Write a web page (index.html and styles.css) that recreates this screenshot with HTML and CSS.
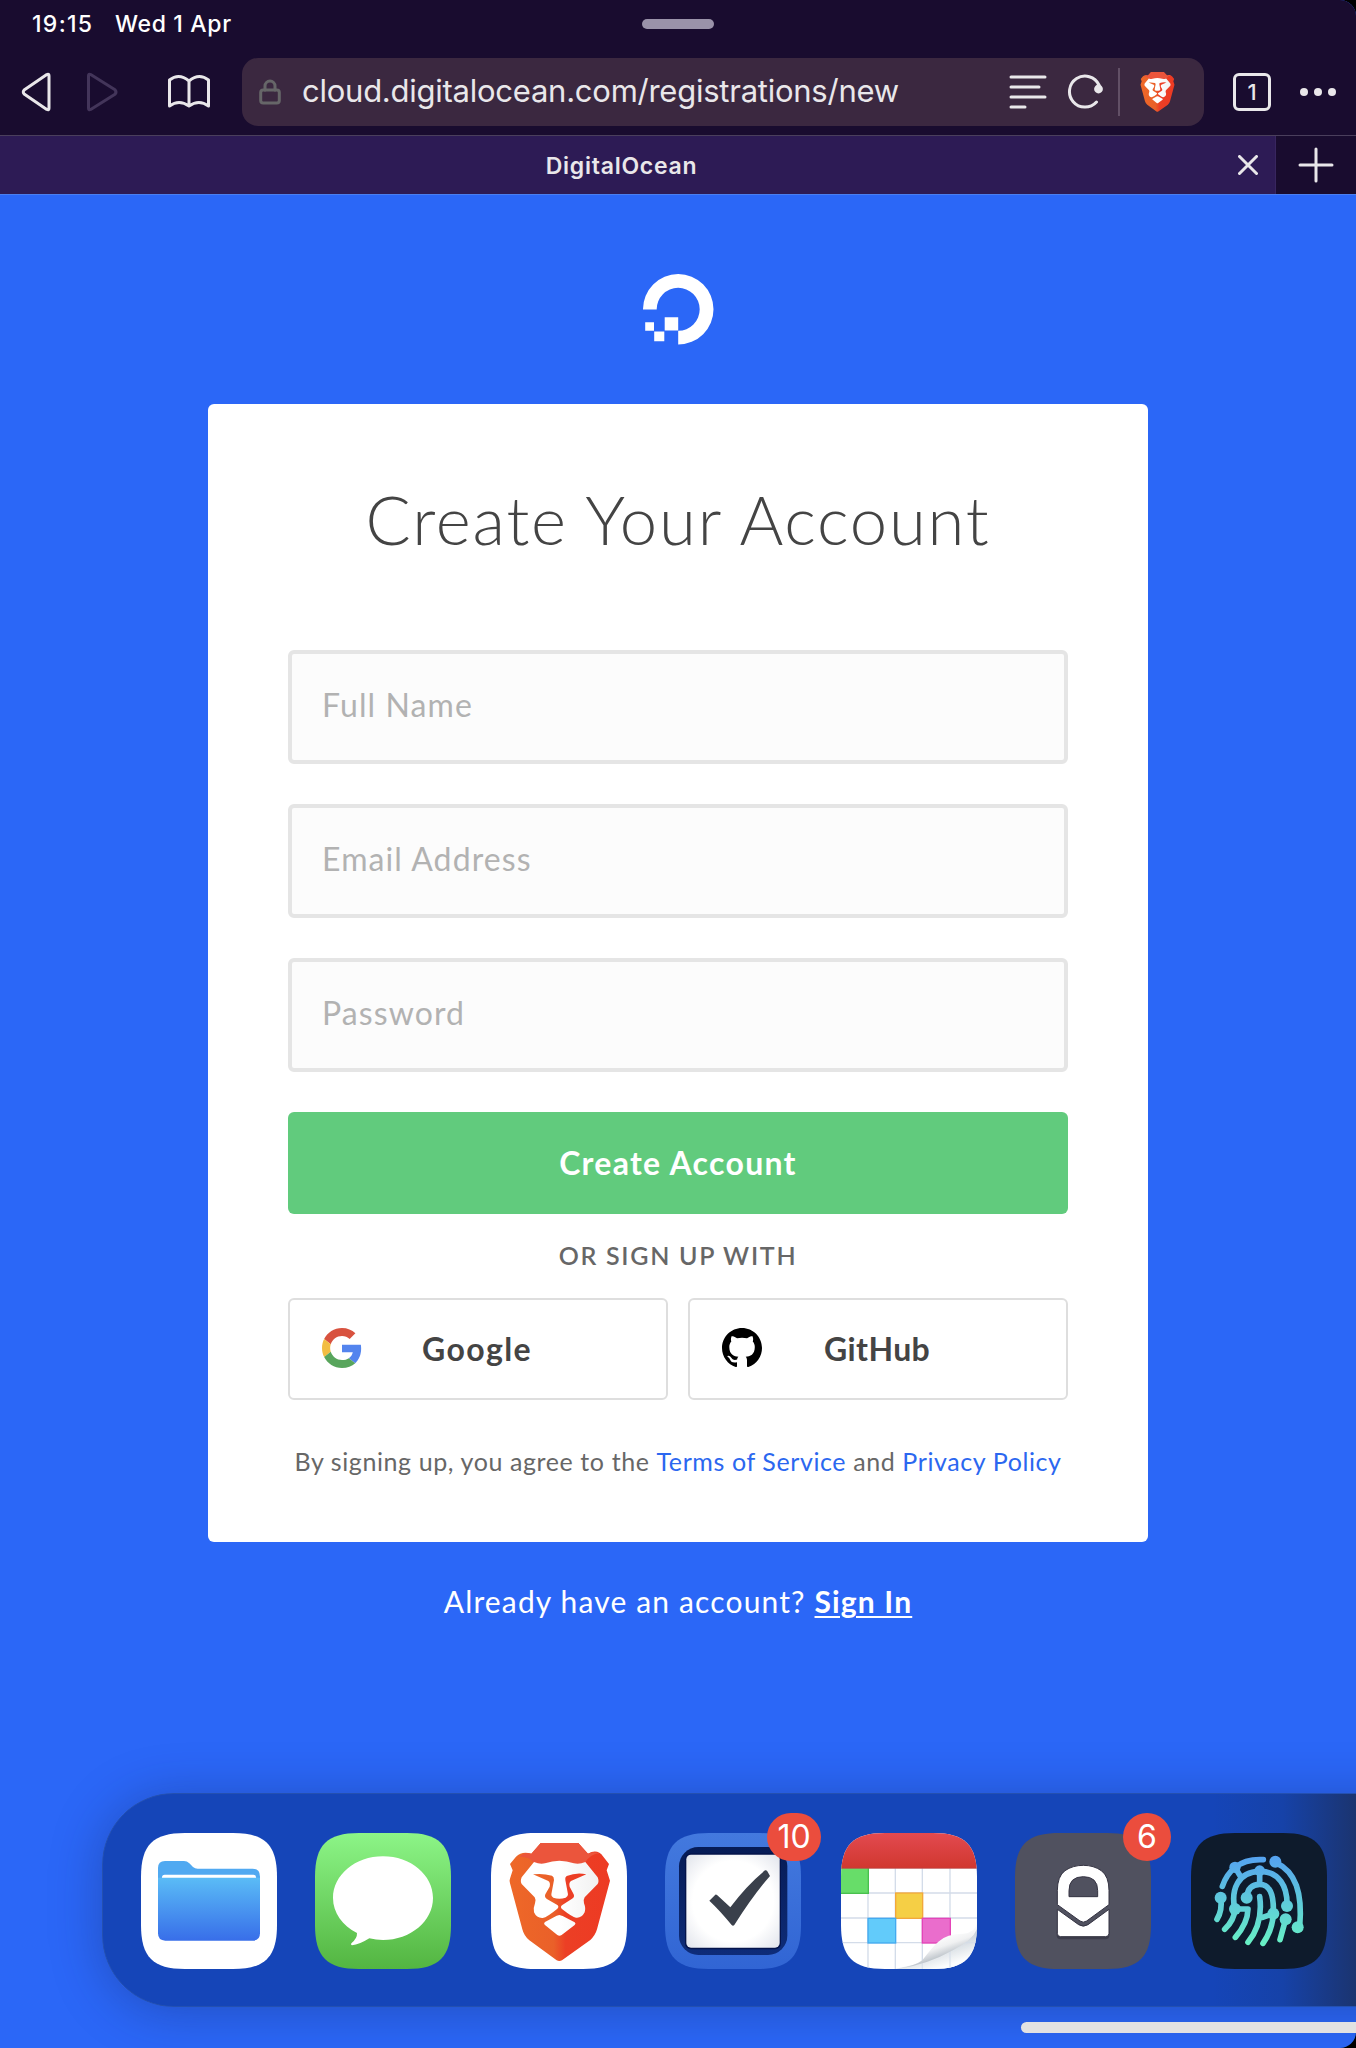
FILE: index.html
```html
<!DOCTYPE html>
<html lang="en">
<head>
<meta charset="utf-8">
<title>DigitalOcean</title>
<link rel="stylesheet" href="styles.css">
</head>
<body>
<svg class="defs" width="0" height="0" aria-hidden="true">
  <defs>
    <linearGradient id="lion-fill" gradientUnits="userSpaceOnUse" x1="118" y1="0" x2="420" y2="0">
      <stop offset="0" stop-color="#ee6828"/><stop offset=".44" stop-color="#ea6029"/><stop offset=".56" stop-color="#ec3f25"/><stop offset="1" stop-color="#ed3a23"/>
    </linearGradient>
    <linearGradient id="lion-face" gradientUnits="userSpaceOnUse" x1="150" y1="0" x2="386" y2="0">
      <stop offset=".5" stop-color="#fff"/><stop offset="1" stop-color="#f1f1f1"/>
    </linearGradient>
  </defs>
  <symbol id="lion" viewBox="118 189 302 356">
    <path fill="url(#lion-fill)" d="M212 189H325L354 221Q382 205 400 230L417 252L410 271L420 302L381 448Q376 466 361 480L276 541Q268 545 260 541L178 481Q162 468 157 448L118 302L128 271L120 252L138 230Q156 212 184 221Z"/>
    <path fill="#eb553c" d="M212 189H325L354 221Q372 213 388 220Q362 222 346 247Q328 256 312 250Q290 242 268 242Q247 242 225 251Q210 256 192 249Q180 230 150 230Q162 214 184 221Z"/>
    <path fill="url(#lion-face)" d="M192 246Q210 254 225 250Q247 242 268 242Q290 242 312 250Q328 254 346 246L383 292Q388 304 383 312L344 352Q339 360 342 370Q348 385 344 397Q335 415 318 413Q308 412 275 386Q270 380 277 375L305 357Q315 352 311 343L299 320Q296 308 303 303L349 283Q320 276 290 288Q284 292 286 300L294 343Q294 351 287 353Q268 359 250 353Q243 351 244 343L252 300Q252 290 246 287Q218 279 189 283L235 303Q242 308 239 320L226 343Q222 352 232 358L262 375Q268 380 262 386Q232 411 218 414Q200 415 192 397Q189 385 195 370Q199 360 194 352L155 312Q150 304 155 292Z"/>
    <path fill="url(#lion-face)" d="M268 405L278 408L314 427Q319 431 314 435L275 465Q268 470 262 465L224 434Q220 430 225 426L260 407Z"/>
  </symbol>
</svg>

<div class="screen">
  <header class="chrome">
    <div class="status">
      <span class="status-time">19:15</span>
      <span class="status-date">Wed 1 Apr</span>
      <span class="grabber"></span>
    </div>
    <div class="toolbar">
      <svg class="ico-back" width="36" height="40" viewBox="0 0 36 40"><path d="M29.5 3.8V36.200Q29.500 38.500 27.300 37.500L5 22.300Q2.500 20 5 17.700L27.300 2.500Q29.500 1.500 29.500 3.800Z" transform="translate(1.500 0)"/></svg>
      <svg class="ico-forward" width="36" height="40" viewBox="0 0 36 40"><path d="M2.500 3.800V36.200Q2.500 38.500 4.700 37.500L29 22.300Q31 20 29 17.700L4.700 2.500Q2.500 1.500 2.500 3.800Z"/></svg>
      <svg class="ico-book" width="44" height="36" viewBox="0 0 44 36"><path d="M22 7Q12 -1.500 2.500 6V32Q12 25 22 32Q32 25 41.500 32V6Q32 -1.500 22 7ZM22 7V32"/></svg>
      <div class="address">
        <svg class="ico-lock" width="22" height="26" viewBox="0 0 22 26"><rect x="1.700" y="11" width="18.600" height="13" rx="2.500"/><path d="M6 11V7A5 5 0 0 1 16 7V11"/></svg>
        <span class="url">cloud.digitalocean.com/registrations/new</span>
        <svg class="ico-reader" width="38" height="36" viewBox="0 0 38 36"><path d="M2 3H36M2 13H30M2 23H36M2 33H16"/></svg>
        <svg class="ico-reload" width="38" height="36" viewBox="0 0 38 36"><path d="M29.500 28A15.500 15.500 0 1 1 32 11"/><circle cx="31.500" cy="15" r="4.400"/></svg>
        <span class="divider"></span>
        <svg class="ico-brave" width="35" height="40"><use href="#lion"/></svg>
      </div>
      <span class="tab-count">1</span>
      <span class="more"><i></i><i></i><i></i></span>
    </div>
    <div class="tabs">
      <div class="tab">
        <span class="tab-title">DigitalOcean</span>
        <svg class="ico-close" width="20" height="20" viewBox="0 0 20 20"><path d="M1.500 1.500L18.500 18.500M18.500 1.500L1.500 18.500"/></svg>
      </div>
      <svg class="ico-plus" width="36" height="36" viewBox="0 0 36 36"><path d="M18 2V34M2 18H34"/></svg>
    </div>
  </header>

  <main class="page">
    <svg class="logo" width="71" height="71" viewBox="0 0 71 71"><path fill="#fff" d="M0 35.500A35.250 35.250 0 1 1 35.200 70.500V56.800A21.500 21.500 0 1 0 13.700 35.500ZM21.700 43.300H35.200V56.500H21.700ZM11.200 57.500H21.300V67.200H11.200ZM2.200 48.300H11V56.700H2.200Z"/></svg>

    <section class="card">
      <h1>Create Your Account</h1>
      <form class="form">
        <input class="field" type="text" placeholder="Full Name">
        <input class="field" type="text" placeholder="Email Address">
        <input class="field" type="text" placeholder="Password">
        <button class="submit" type="button"><span class="submit-label">Create Account</span></button>
      </form>
      <p class="or">OR SIGN UP WITH</p>
      <div class="providers">
        <a class="provider">
          <svg width="40" height="40" viewBox="0 0 48 48"><path fill="#d8523f" d="M24 9.500c3.540 0 6.710 1.220 9.210 3.600l6.850-6.850C35.900 2.380 30.470 0 24 0 14.620 0 6.510 5.380 2.560 13.220l7.980 6.190C12.430 13.720 17.740 9.500 24 9.500z"/><path fill="#5384ee" d="M46.980 24.550c0-1.570-.15-3.090-.38-4.550H24v9.020h12.940c-.58 2.960-2.260 5.480-4.780 7.180l7.730 6c4.510-4.180 7.090-10.360 7.090-17.650z"/><path fill="#f2bd42" d="M10.530 28.590c-.48-1.450-.76-2.990-.76-4.590s.27-3.140.76-4.590l-7.980-6.190C.92 16.460 0 20.120 0 24c0 3.880.92 7.540 2.560 10.780l7.970-6.190z"/><path fill="#58a55c" d="M24 48c6.480 0 11.930-2.130 15.890-5.810l-7.730-6c-2.150 1.450-4.920 2.300-8.160 2.300-6.260 0-11.570-4.220-13.470-9.910l-7.980 6.190C6.510 42.620 14.620 48 24 48z"/></svg>
          <span class="provider-name google">Google</span>
        </a>
        <a class="provider">
          <svg width="40" height="40" viewBox="0 0 16 16"><path d="M8 0C3.580 0 0 3.580 0 8c0 3.540 2.290 6.530 5.470 7.590.4.070.55-.17.55-.38 0-.19-.01-.82-.01-1.490-2.010.37-2.530-.49-2.690-.94-.09-.23-.48-.94-.82-1.130-.28-.15-.68-.52-.01-.53.63-.01 1.080.58 1.230.82.72 1.210 1.870.87 2.330.66.070-.52.28-.87.51-1.070-1.780-.2-3.640-.89-3.640-3.950 0-.87.31-1.590.82-2.150-.08-.2-.36-1.020.08-2.120 0 0 .67-.21 2.200.82.64-.18 1.320-.27 2-.27s1.360.09 2 .27c1.530-1.040 2.200-.82 2.200-.82.44 1.100.16 1.920.08 2.120.51.56.82 1.270.82 2.150 0 3.070-1.870 3.750-3.650 3.950.29.25.54.73.54 1.480 0 1.070-.01 1.930-.01 2.200 0 .21.15.46.55.38A8.010 8.010 0 0 0 16 8c0-4.420-3.580-8-8-8z"/></svg>
          <span class="provider-name github">GitHub</span>
        </a>
      </div>
      <p class="terms">By signing up, you agree to the <a>Terms of Service</a> and <a>Privacy Policy</a></p>
    </section>
    <p class="signin">Already have an account? <a>Sign In</a></p>
  </main>

  <nav class="dock">
    <div class="app">
      <svg class="app-icon" viewBox="153 159 408 408">
        <defs>
          <linearGradient id="folder-front" x1="0" y1="0" x2="0" y2="1"><stop offset="0" stop-color="#5abcf6"/><stop offset="1" stop-color="#386ee9"/></linearGradient>
        </defs>
        <rect x="153" y="159" width="408" height="408" fill="#fff"/>
        <path fill="#50a9f1" d="M204 300V264Q204 243 225 243H282Q291 243 298 250L309 261Q315 266 323 266H488Q510 266 510 290V320H204Z"/>
        <rect x="216" y="284" width="282" height="30" rx="8" fill="#fff"/>
        <path fill="url(#folder-front)" d="M204 293H510V460Q510 482 488 482H226Q204 482 204 460Z"/>
      </svg>
    </div>
    <div class="app">
      <svg class="app-icon" viewBox="675 159 408 408">
        <defs><linearGradient id="msg" x1="0" y1="0" x2="0" y2="1"><stop offset="0" stop-color="#8cf587"/><stop offset="1" stop-color="#53b541"/></linearGradient></defs>
        <rect x="675" y="159" width="408" height="408" fill="url(#msg)"/>
        <path fill="#fff" d="M879 229C962 229 1029 285 1029 354S962 480 879 480Q858 480 838 475Q808 494 786 496Q781 495 784 490Q802 475 801 459C757 437 729 398 729 354C729 285 796 229 879 229Z"/>
      </svg>
    </div>
    <div class="app">
      <svg class="app-icon" viewBox="63 159 408 408">
        <rect x="63" y="159" width="408" height="408" fill="#fff"/>
        <use href="#lion" x="118" y="189" width="302" height="356"/>
      </svg>
    </div>
    <div class="app">
      <svg class="app-icon" viewBox="585 159 408 408">
        <defs>
          <linearGradient id="task" x1="0" y1="0" x2="0" y2="1"><stop offset="0" stop-color="#4379de"/><stop offset="1" stop-color="#3165d4"/></linearGradient>
          <linearGradient id="task-well" x1="0" y1="0" x2="0" y2="1"><stop offset="0" stop-color="#061b55"/><stop offset="1" stop-color="#0e2c79"/></linearGradient>
          <radialGradient id="paper" r=".72"><stop offset=".6" stop-color="#fff"/><stop offset="1" stop-color="#dfe2ea"/></radialGradient>
        </defs>
        <rect x="585" y="159" width="408" height="408" fill="url(#task)"/>
        <rect x="627" y="201" width="325" height="324" rx="58" fill="url(#task-well)"/>
        <rect x="645" y="220" width="288" height="288" rx="18" fill="#04134a"/>
        <rect x="649" y="224" width="280" height="279" rx="14" fill="url(#paper)"/>
        <path fill="#3a404b" d="M718 362L736 344Q739 343 742 346L781 382Q830 316 885 271Q889 269 892 274L900 288Q850 345 793 435Q789 440 785 435Q750 392 718 362Z"/>
      </svg>
      <span class="badge badge-wide">10</span>
    </div>
    <div class="app">
      <svg class="app-icon" viewBox="63 159 408 408">
        <defs>
          <linearGradient id="cal-top" x1="0" y1="0" x2="0" y2="1"><stop offset="0" stop-color="#e24a50"/><stop offset="1" stop-color="#d1372f"/></linearGradient>
          <linearGradient id="curl" x1=".4" y1=".35" x2=".62" y2=".72"><stop offset="0" stop-color="#fff"/><stop offset=".5" stop-color="#f0f1f2"/><stop offset="1" stop-color="#b9c0c7"/></linearGradient>
          <linearGradient id="under" x1=".4" y1=".35" x2=".8" y2="1"><stop offset="0" stop-color="#b9c4cf"/><stop offset=".8" stop-color="#fcfdfd"/></linearGradient>
        </defs>
        <rect x="63" y="159" width="408" height="408" fill="#fff"/>
        <path d="M144 265V567M226 265V567M307 265V567M390 265V567M63 339H471M63 414H471M63 488H471" stroke="#d3dce9" stroke-width="4" fill="none"/>
        <g stroke-width="4">
          <rect x="55" y="258" width="90" height="82" fill="#67dd69" stroke="#49c04e"/>
          <rect x="227" y="339" width="81" height="76" fill="#f5cf45" stroke="#f2a83b"/>
          <rect x="144" y="415" width="83" height="74" fill="#62cbfa" stroke="#43aaf0"/>
          <rect x="307" y="415" width="84" height="74" fill="#ea6dcc" stroke="#e444b8"/>
        </g>
        <rect x="63" y="159" width="408" height="106" fill="url(#cal-top)"/>
        <path d="M63 265H471" stroke="#b64a4a" stroke-width="2"/>
        <path fill="url(#under)" d="M225 567Q330 548 400 505Q460 470 471 435V567Z"/>
        <path d="M390 505V567M307 545V567M400 488H471" stroke="#d3dce9" stroke-width="4" opacity=".7"/>
        <path fill="url(#curl)" d="M232 567Q285 558 307 541Q335 503 355 485Q380 461 430 461Q466 458 471 430V448Q458 480 400 510Q320 555 232 567Z"/>
      </svg>
    </div>
    <div class="app">
      <svg class="app-icon" viewBox="585 159 408 408">
        <rect x="585" y="159" width="408" height="408" fill="#50515f"/>
        <rect x="710" y="445" width="158" height="33" rx="12" fill="#3d3d4b"/>
        <g stroke="#343342" stroke-width="3">
          <path fill="#fff" fill-rule="evenodd" d="M712 374V332Q712 289 735 272Q758 256 790 256Q821 256 844 272Q867 289 867 332V374L800 423Q790 430 780 423ZM747 350H833V332Q833 290 790 290Q747 290 747 332Z"/>
          <path fill="#fff" d="M712 388L776 434Q790 443 804 434L867 388V460Q867 470 857 470H722Q712 470 712 460Z"/>
        </g>
      </svg>
      <span class="badge">6</span>
    </div>
    <div class="app">
      <svg class="app-icon" viewBox="105 159 408 408">
        <defs><linearGradient id="print" gradientUnits="userSpaceOnUse" x1="0" y1="230" x2="0" y2="497"><stop offset="0" stop-color="#55a2f0"/><stop offset="1" stop-color="#68f2c4"/></linearGradient></defs>
        <rect x="105" y="159" width="408" height="408" fill="#0e1b2c"/>
        <g fill="none" stroke="url(#print)" stroke-width="17" stroke-linecap="round" stroke-linejoin="round">
          <path d="M199 319Q211 283 237 262Q270 236 322 239M237 262L254 290"/>
          <path d="M358 247C420 275 440 340 431 440"/>
          <path d="M236 385C225 330 245 275 311 274C370 274 395 320 393 378"/>
          <path d="M311 272V312M272 352C275 325 290 313 311 313C340 313 354 340 352 400C350 440 335 470 321 490"/>
          <path d="M311 350Q322 430 276 487M320 412L352 401"/>
          <path d="M194 353Q200 390 183 418"/>
          <path d="M237 387Q235 420 206 448M237 387H276Q275 430 238 472M389 418L372 479"/>
        </g>
        <g fill="url(#print)"><circle cx="237" cy="262" r="17"/><circle cx="358" cy="245" r="18"/><circle cx="425" cy="442" r="18"/><circle cx="237" cy="387" r="18"/><circle cx="393" cy="378" r="18"/><circle cx="311" cy="272" r="16"/><circle cx="272" cy="353" r="18"/><circle cx="352" cy="401" r="18"/><circle cx="194" cy="353" r="18"/><circle cx="389" cy="418" r="18"/></g>
      </svg>
    </div>
  </nav>
  <div class="home-bar"></div>
</div>
</body>
</html>
```
FILE: styles.css
```css
* { box-sizing: border-box; }
body { margin: 0; background: #000; }
p, h1 { margin: 0; }
svg { display: block; flex: none; }
.defs { position: absolute; }

.screen {
  width: 1356px;
  height: 2048px;
  display: flex;
  flex-direction: column;
  overflow: hidden;
  background: #2b67f7;
  border-radius: 0 16px 16px 0;
  font-family: Lato, sans-serif;
}

/* Browser chrome */
.chrome {
  height: 195px;
  background: #190c2f;
  color: #e9e7ea;
  font-family: Inter, sans-serif;
}
.status {
  display: flex;
  align-items: center;
  height: 48px;
  padding-left: 32px;
  font-size: 23px;
  font-weight: 500;
  color: #fff;
  white-space: nowrap;
}
.status-time { width: 83px; letter-spacing: 1.3px; }
.status-date { width: 527px; letter-spacing: .65px; }
.grabber { width: 72px; height: 10px; border-radius: 5px; background: #9a92a9; }

.toolbar { display: flex; align-items: center; height: 87px; padding: 1px 20px 0 18px; }
.toolbar svg { fill: none; stroke: #e9e7ea; stroke-width: 3; stroke-linejoin: round; stroke-linecap: round; }
.toolbar .ico-forward { margin-left: 32px; stroke: #43355a; }
.toolbar .ico-book { margin-left: 45px; }
.toolbar .ico-brave { margin-left: 20px; stroke: none; }
.toolbar .ico-lock { stroke: #666668; }
.address {
  display: flex;
  align-items: center;
  width: 962px;
  height: 68px;
  margin-left: 31px;
  padding-left: 17px;
  border-radius: 16px;
  background: #3b2840;
}
.url { width: 706px; margin-left: 21px; padding-bottom: 3px; font-size: 31px; line-height: 40px; letter-spacing: -.25px; white-space: nowrap; }
.ico-reader { margin-left: 1px; }
.ico-reload { margin-left: 20px; }
.ico-reload circle { fill: #e9e7ea; stroke: none; }
.divider { width: 2px; height: 48px; margin-left: 13px; background: #625066; }
.tab-count {
  width: 38px;
  height: 38px;
  margin-left: 29px;
  border: 3px solid #e9e7ea;
  border-radius: 6px;
  font-size: 22px;
  font-weight: 500;
  line-height: 32px;
  text-align: center;
}
.more { display: flex; gap: 6px; margin-left: 29px; }
.more i { width: 8px; height: 8px; border-radius: 50%; background: #e9e7ea; }

.tabs { display: flex; align-items: center; height: 60px; border-top: 1px solid #4a3f5c; border-bottom: 1px solid #4a7ff0; }
.tab { display: flex; align-items: center; width: 1276px; height: 58px; border-right: 1px solid #38265f; background: #2d1b55; }
.tab-title { width: 1238px; padding: 2px 0 0 5px; text-align: center; font-size: 23px; font-weight: 600; letter-spacing: .75px; }
.tabs svg { fill: none; stroke: #e9e7ea; stroke-width: 3; stroke-linecap: round; }
.ico-plus { margin-left: 22px; }

/* Sign-up page */
.page { display: flex; flex-direction: column; align-items: center; height: 1598px; padding-top: 79px; }
.card { width: 940px; height: 1138px; margin-top: 59px; padding: 69px 80px 0; border-radius: 6px; background: #fff; color: #444; text-align: center; }
h1 { font-size: 67px; font-weight: 300; line-height: 92px; letter-spacing: 1.8px; white-space: nowrap; }
.form { display: flex; flex-direction: column; gap: 40px; margin-top: 85px; }
.field {
  height: 114px;
  padding: 0 30px 6px;
  border: 4px solid #e5e5e5;
  border-radius: 6px;
  background: #fcfcfc;
  font: 400 32px Lato, sans-serif;
  letter-spacing: 1.1px;
}
.field::placeholder { color: #b2b2b2; }
.submit { height: 102px; padding: 0 0 2px; border: 0; border-radius: 6px; background: #61cb7d; color: #fff; font: 700 32px Lato, sans-serif; letter-spacing: 1.3px; }
.or { margin-top: 25px; color: #676767; font-size: 25px; font-weight: 600; line-height: 32px; letter-spacing: 1.7px; }
.providers { display: grid; grid-template-columns: 1fr 1fr; gap: 20px; margin-top: 27px; }
.provider { display: flex; align-items: center; height: 102px; padding: 0 0 2px 32px; border: 2px solid #dedede; border-radius: 6px; }
.provider-name { margin-left: 60px; font-size: 32px; font-weight: 700; white-space: nowrap; }
.google { letter-spacing: 1.4px; }
.github { margin-left: 62px; letter-spacing: .4px; }
.terms { display: flex; justify-content: center; margin-top: 44px; color: #676767; font-size: 25px; line-height: 34px; letter-spacing: .6px; white-space: pre; }
.terms a { color: #2b67f0; }
.signin { margin-top: 39px; color: #fff; font-size: 30px; line-height: 40px; letter-spacing: 1.15px; white-space: nowrap; }
.signin a { font-weight: 700; text-decoration: underline; text-underline-offset: 3px; text-decoration-thickness: 2px; }

/* App dock */
.dock {
  display: grid;
  grid-template-columns: 174px 176px 174px 176px 174px 176px 136px;
  flex: none;
  width: 1400px;
  height: 214px;
  margin-left: 102px;
  padding: 39px 0 0 38px;
  border: 1px solid #2450b0;
  border-radius: 72px 0 0 72px;
  background: linear-gradient(90deg, #1545b8 0 1110px, #1642a8 1180px, #1b346f 1254px);
  box-shadow: 0 4px 50px rgba(20, 40, 100, .38);
}
.app { position: relative; width: 136px; height: 136px; }
.app-icon {
  width: 136px;
  height: 136px;
  clip-path: path("M44 0H92C124 0 136 12 136 44V92C136 124 124 136 92 136H44C12 136 0 124 0 92V44C0 12 12 0 44 0Z");
}
.badge {
  position: absolute;
  top: -20px;
  right: -20px;
  width: 48px;
  height: 48px;
  border-radius: 24px;
  background: #eb4d3d;
  color: #fff;
  font: 400 32px/48px Inter, sans-serif;
  text-align: center;
}
.badge-wide { width: 54px; }
.home-bar { flex: none; width: 335px; height: 11px; margin: 15px 0 0 1021px; border-radius: 6px 0 0 6px; background: #e2e2e2; }
```
